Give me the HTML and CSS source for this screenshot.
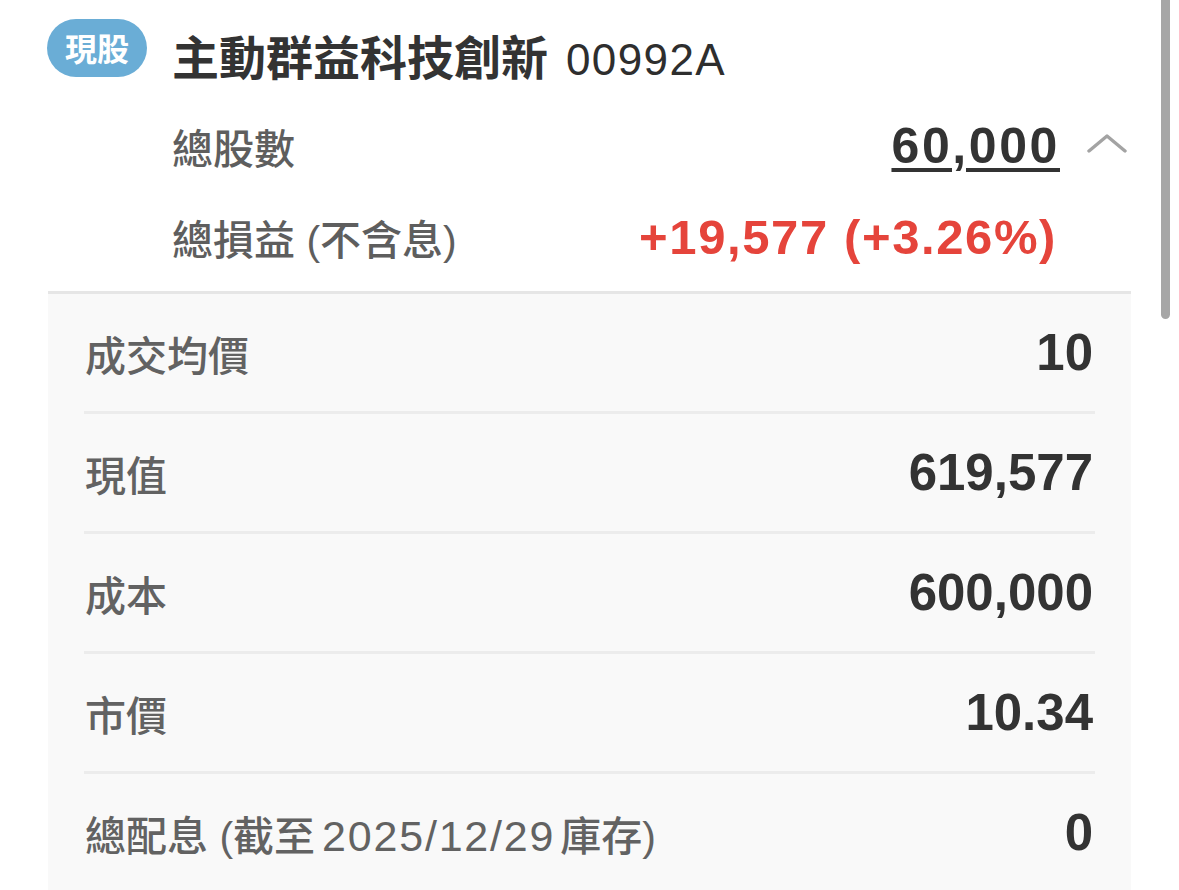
FILE: index.html
```html
<!DOCTYPE html>
<html lang="zh-Hant">
<head>
<meta charset="utf-8">
<title>主動群益科技創新 00992A</title>
<link rel="stylesheet" href="styles.css">
</head>
<body>
<div class="page">
  <header class="header">
    <span class="badge">現股</span>
    <h1 class="title">主動群益科技創新<span class="code">00992A</span></h1>
  </header>

  <section class="summary">
    <div class="sum-row">
      <span class="sum-label">總股數</span>
      <span class="sum-value shares">60,000</span>
      <span class="chevron">
        <svg width="40" height="20" viewBox="0 0 40 20"><polyline points="2,18 20,3 38,18" fill="none" stroke="#a3a3a3" stroke-width="3.4" stroke-linecap="round" stroke-linejoin="round"/></svg>
      </span>
    </div>
    <div class="sum-row">
      <span class="sum-label">總損益 (不含息)</span>
      <span class="sum-value profit">+19,577 (+3.26%)</span>
      <span class="chevron"></span>
    </div>
  </section>

  <section class="details">
    <div class="row"><span class="label">成交均價</span><span class="value">10</span></div>
    <div class="row"><span class="label">現值</span><span class="value">619,577</span></div>
    <div class="row"><span class="label">成本</span><span class="value">600,000</span></div>
    <div class="row"><span class="label">市價</span><span class="value">10.34</span></div>
    <div class="row"><span class="label">總配息 (截至<span class="date">2025/12/29</span>庫存)</span><span class="value">0</span></div>
  </section>
</div>
<div class="scrollbar"></div>
</body>
</html>
```
FILE: styles.css
```css
html, body {
  margin: 0;
  padding: 0;
  background: #ffffff;
  overflow: hidden;
}

body {
  font-family: "Liberation Sans", "Noto Sans CJK TC", sans-serif;
  color: #333333;
}

.page {
  width: 1179px;
  height: 890px;
  overflow: hidden;
}

.header {
  display: flex;
  align-items: flex-end;
  padding: 19px 0 0 47px;
  height: 58px;
}

.badge {
  display: flex;
  align-items: center;
  justify-content: center;
  width: 100px;
  height: 58px;
  border-radius: 29px;
  background: #6aadd6;
  color: #ffffff;
  font-family: "Noto Sans CJK TC", sans-serif;
  font-weight: 700;
  font-size: 32px;
  line-height: 1;
  padding-bottom: 3px;
  box-sizing: border-box;
}

.title {
  margin: 0 0 -6px 25px;
  font-family: "Noto Sans CJK TC", sans-serif;
  font-weight: 700;
  font-size: 47px;
  line-height: 47px;
  color: #333333;
  white-space: nowrap;
}

.code {
  font-family: "Liberation Sans", sans-serif;
  font-weight: 400;
  font-size: 44px;
  letter-spacing: 1.4px;
  margin-left: 18px;
  color: #2e2e2e;
}

.summary {
  padding: 23px 52px 0 172px;
  margin-bottom: 9px;
}

.sum-row {
  display: flex;
  align-items: center;
  height: 91px;
}

.sum-label {
  flex: 1;
  font-size: 41px;
  font-weight: 500;
  color: #5e5e5e;
}

.sum-value {
  font-weight: 700;
}

.shares {
  font-size: 50px;
  color: #333333;
  letter-spacing: 2.6px;
  margin-right: -3px;
  text-decoration: underline;
  text-decoration-thickness: 4px;
  text-underline-offset: 5px;
}

.profit {
  font-size: 49px;
  color: #e5443b;
  letter-spacing: 1.6px;
}

.chevron {
  width: 40px;
  margin-left: 30px;
  display: flex;
  align-items: center;
  padding-bottom: 6px;
}

.details {
  margin-left: 48px;
  width: 1083px;
  height: 600px;
  box-sizing: border-box;
  background: #f9f9f9;
  border-top: 3px solid #e6e6e6;
  padding: 0 36px;
}

.row {
  display: flex;
  align-items: center;
  justify-content: space-between;
  height: 117px;
  border-bottom: 3px solid #ececec;
  padding: 0 2px 0 1px;
}

.row:last-child {
  border-bottom: none;
}

.label {
  font-size: 41px;
  font-weight: 500;
  color: #626262;
  white-space: nowrap;
}

.date {
  font-size: 43px;
  letter-spacing: 1.8px;
  margin: 0 5px 0 7px;
}

.value {
  font-weight: 700;
  font-size: 51px;
  color: #333333;
}

.scrollbar {
  position: fixed;
  top: -10px;
  left: 1161px;
  width: 9px;
  height: 329px;
  border-radius: 5px;
  background: #a6a6a6;
}
```
